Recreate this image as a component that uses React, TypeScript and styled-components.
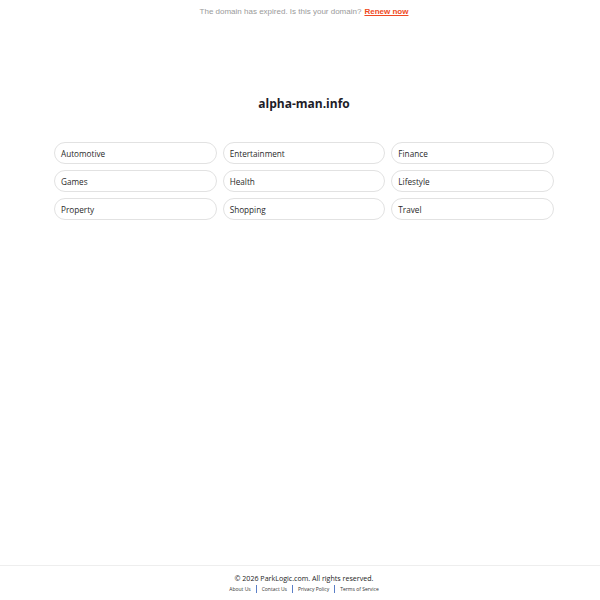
import React from 'react';
import styled, { createGlobalStyle } from 'styled-components';

const GlobalStyle = createGlobalStyle`
  html, body {
    margin: 0;
    padding: 0;
    background: #ffffff;
  }

  #root {
    min-height: 100vh;
    display: flex;
    flex-direction: column;
  }
`;

const Page = styled.div`
  flex: 1;
  display: flex;
  flex-direction: column;
  font-family: 'Open Sans', 'Noto Sans', sans-serif;
`;

const TopBar = styled.div`
  height: 22px;
  padding-left: 8px;
  display: flex;
  align-items: center;
  justify-content: center;
  font-family: 'Liberation Sans', Arial, sans-serif;
  font-size: 8px;
  color: #9a9a9a;

  a {
    margin-left: 3px;
    color: #ef4a23;
    font-weight: bold;
    text-decoration: underline;
  }
`;

const Main = styled.main`
  flex: 1;
  display: flex;
  flex-direction: column;
  align-items: center;
  padding: 73px 0 0 8px;
`;

const Title = styled.h1`
  margin: 0;
  font-size: 12px;
  font-weight: 700;
  color: #1c1c28;
  line-height: 18px;
`;

const Grid = styled.div`
  margin-top: 29px;
  width: 500px;
  display: grid;
  grid-template-columns: repeat(3, 1fr);
  column-gap: 6px;
  row-gap: 6px;
`;

const Pill = styled.a`
  height: 20px;
  display: flex;
  align-items: center;
  padding: 0 6px;
  border: 1px solid #e2e2e2;
  border-radius: 12px;
  font-size: 8.2px;
  color: #2a2a2a;
  text-decoration: none;
`;

const Footer = styled.footer`
  height: 35px;
  box-sizing: border-box;
  border-top: 1px solid #eeeeee;
  padding: 7px 0 0 8px;
  display: flex;
  flex-direction: column;
  align-items: center;
  gap: 1px;
  font-family: 'Open Sans', 'Noto Sans', sans-serif;
`;

const Copy = styled.div`
  font-size: 7.1px;
  line-height: 10px;
  color: #222;
`;

const Links = styled.div`
  display: flex;
  align-items: center;
  font-size: 5px;
  line-height: 10px;
  color: #333;
`;

const Sep = styled.span`
  width: 1px;
  height: 8px;
  background: #5b7fc7;
  margin: 0 5px;
`;

const categories = [
  'Automotive',
  'Entertainment',
  'Finance',
  'Games',
  'Health',
  'Lifestyle',
  'Property',
  'Shopping',
  'Travel',
];

const footerLinks = ['About Us', 'Contact Us', 'Privacy Policy', 'Terms of Service'];

export default function App() {
  return (
    <>
      <GlobalStyle />
      <Page>
        <TopBar>
          The domain has expired. Is this your domain?
          <a href="#">Renew now</a>
        </TopBar>
        <Main>
          <Title>alpha-man.info</Title>
          <Grid>
            {categories.map((c) => (
              <Pill key={c} href="#">
                {c}
              </Pill>
            ))}
          </Grid>
        </Main>
        <Footer>
          <Copy>© 2026 ParkLogic.com. All rights reserved.</Copy>
          <Links>
            {footerLinks.map((l, i) => (
              <React.Fragment key={l}>
                {i > 0 && <Sep />}
                <span>{l}</span>
              </React.Fragment>
            ))}
          </Links>
        </Footer>
      </Page>
    </>
  );
}
